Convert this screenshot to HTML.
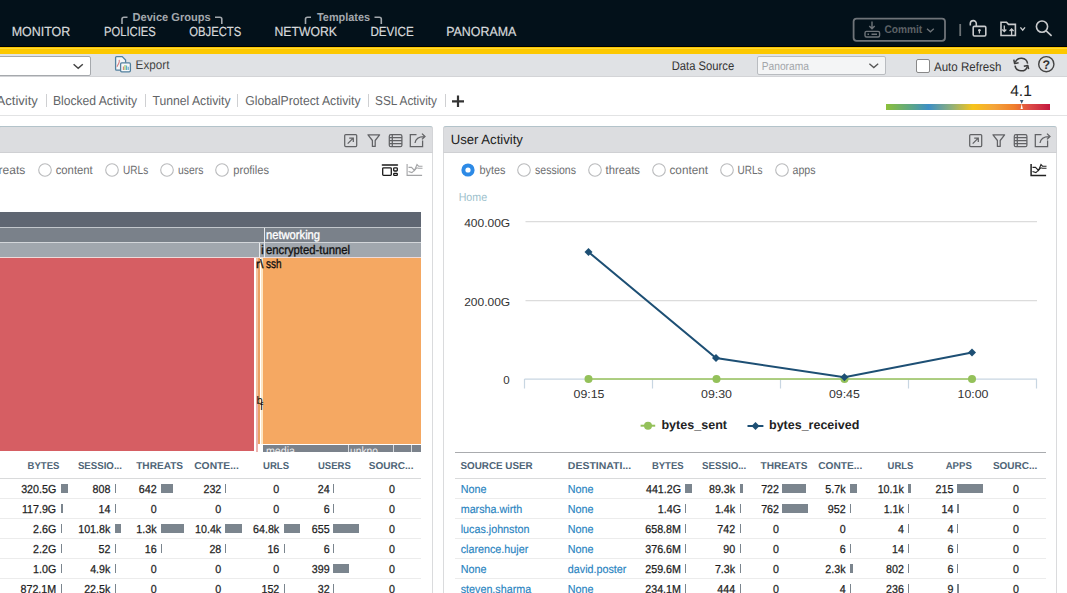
<!DOCTYPE html><html><head><meta charset="utf-8"><style>
html,body{margin:0;padding:0;width:1067px;height:593px;overflow:hidden;background:#fff;position:relative}
.t{position:absolute;white-space:pre;line-height:1;transform-origin:0 0;font-family:"Liberation Sans",sans-serif}
.r{position:absolute}
.s{position:absolute;overflow:visible}
</style></head><body>
<div class="r" style="left:0px;top:0px;width:1067px;height:47px;background:#03111a;"></div>
<div class="r" style="left:0px;top:46px;width:1067px;height:1px;background:#000;"></div>
<div class="r" style="left:0px;top:47px;width:1067px;height:7px;background:#fcc800;"></div>
<div class="r" style="left:0px;top:47.5px;width:1067px;height:1px;background:#ffd838;"></div>
<div class="r" style="left:0px;top:54px;width:1067px;height:23px;background:#e0e2e5;"></div>
<div class="r" style="left:0px;top:76px;width:1067px;height:1px;background:#d3d4d7;"></div>
<svg class="s" style="left:0;top:0" width="540" height="47" viewBox="0 0 540 47" fill="none" stroke="#a3a8ad" stroke-width="1.6">
<path d="M122 24 V19 Q122 17.2 124 17.2 H127.5"/><path d="M215 17.2 H219.8 Q221.8 17.2 221.8 19 V24"/>
<path d="M305.5 24 V19 Q305.5 17.2 307.5 17.2 H311"/><path d="M374.5 17.2 H379.3 Q381.3 17.2 381.3 19 V24"/>
</svg>
<svg class="s" style="left:840px;top:10px" width="227" height="37" viewBox="840 10 227 37" fill="none" stroke="#6f7479" stroke-width="1.8">
<rect x="853.6" y="18.6" width="91.4" height="22.2" rx="3"/>
<path d="M872 21.5 V28.5 M869.3 26 L872 28.8 L874.7 26" stroke-width="1.4"/>
<rect x="865" y="31.4" width="14.6" height="5.6" rx="1.5" stroke-width="1.4"/>
<path d="M867.5 34.2 H869 M871.5 34.2 H877" stroke-width="1.4"/>
<path d="M927 28.8 L930.4 31.8 L933.8 28.8" stroke-width="1.3"/>
</svg>
<svg class="s" style="left:950px;top:10px" width="117" height="37" viewBox="950 10 117 37" fill="none" stroke="#c9cbcd" stroke-width="1.6">
<path d="M960.2 24 V36" stroke="#6c7175" stroke-width="1.8"/>
<path d="M970.3 25.6 V23.6 A3 3 0 0 1 976.3 23.6 V26"/>
<rect x="973.2" y="26.4" width="12.6" height="9.6" rx="1.2"/>
<circle cx="979.4" cy="30.3" r="1.3" fill="#c9cbcd" stroke="none"/><path d="M979.4 30.5 V33.4" stroke-width="1.2"/>
<path d="M1001 22.2 H1006.5 L1008.5 24.4 H1015.4 V35.5 H1001 Z"/>
<path d="M1004.3 25.5 V31.5 M1002.3 29.5 L1004.3 31.6 L1006.3 29.5 M1011.6 35 V29 M1009.6 31 L1011.6 28.9 L1013.6 31" stroke-width="1.3"/>
<path d="M1020.4 27.4 L1022.7 30.2 L1025 27.4" stroke-width="1.4"/>
<circle cx="1042" cy="26.6" r="5.6"/><path d="M1046.2 30.8 L1051.6 35.8"/>
</svg>
<div class="r" style="left:-4px;top:55.5px;width:94.5px;height:20px;background:#fff;border:1px solid #a6a9ad;border-radius:2px;box-sizing:border-box;"></div>
<svg class="s" style="left:60px;top:55px" width="40" height="22" viewBox="60 55 40 22" fill="none" stroke="#444" stroke-width="1.5">
<path d="M73.6 64.3 L78.2 68.3 L82.8 64.3"/></svg>
<svg class="s" style="left:110px;top:52px" width="26" height="24" viewBox="110 52 26 24" fill="none">
<path d="M116.6 56.6 H122.2 L125.6 60 V69.2 Q125.6 70.2 124.6 70.2 H116.6 Q115.6 70.2 115.6 69.2 V57.6 Q115.6 56.6 116.6 56.6 Z" stroke="#52809f" stroke-width="1.3" fill="#f4f6f8"/>
<path d="M119.2 59.8 Q119.6 62 118.6 63.6 Q117.6 65.2 117 66.8" stroke="#d88080" stroke-width="1.1"/>
<rect x="120.6" y="62.8" width="9.8" height="9" rx="1.2" stroke="#52809f" stroke-width="1.3" fill="#f7f9fa"/>
<path d="M123.4 70 V66.4" stroke="#d8826e" stroke-width="1.1"/><path d="M125 70 V65" stroke="#8cc063" stroke-width="1.1"/><path d="M126.6 70 V65.6" stroke="#5aa8c8" stroke-width="1.1"/><path d="M128.2 70 V66.8" stroke="#5aa8c8" stroke-width="1.1"/>
</svg>
<div class="r" style="left:756.5px;top:56px;width:129.5px;height:19px;background:#f4f5f6;border:1px solid #b9bcc0;border-radius:2px;box-sizing:border-box;"></div>
<svg class="s" style="left:860px;top:56px" width="26" height="19" viewBox="860 56 26 19" fill="none" stroke="#555" stroke-width="1.3">
<path d="M869.4 63.8 L873.8 67.6 L878.2 63.8"/></svg>
<div class="r" style="left:916px;top:59px;width:13.5px;height:13.5px;background:#fff;border:1px solid #888;border-radius:2px;box-sizing:border-box;"></div>
<svg class="s" style="left:1010px;top:54px" width="57" height="22" viewBox="1010 54 57 22" fill="none" stroke="#3c3c3c" stroke-width="1.5">
<path d="M1015.2 62.6 A6.4 6.4 0 0 1 1027.6 63.6"/>
<path d="M1027.4 66.4 A6.4 6.4 0 0 1 1015 65.6"/>
<path d="M1013.8 59.6 L1014.6 63.6 L1018.6 62.8" stroke-linejoin="round"/>
<path d="M1028.6 69.2 L1027.8 65.4 L1023.8 66.2" stroke-linejoin="round"/>
<circle cx="1046.3" cy="64.2" r="7.6" stroke="#444" stroke-width="1.4"/>
</svg>
<div class="r" style="left:0px;top:77px;width:1067px;height:38px;background:#fff;"></div>
<div class="r" style="left:0px;top:115px;width:1067px;height:1px;background:#e2e3e4;"></div>
<div class="r" style="left:46px;top:94px;width:1px;height:12.5px;background:#cfd0d2;"></div>
<div class="r" style="left:145px;top:94px;width:1px;height:12.5px;background:#cfd0d2;"></div>
<div class="r" style="left:237px;top:94px;width:1px;height:12.5px;background:#cfd0d2;"></div>
<div class="r" style="left:368px;top:94px;width:1px;height:12.5px;background:#cfd0d2;"></div>
<div class="r" style="left:445px;top:94px;width:1px;height:12.5px;background:#cfd0d2;"></div>
<svg class="s" style="left:448px;top:92px" width="20" height="20" viewBox="448 92 20 20" stroke="#333" stroke-width="2.2">
<path d="M458 95.5 V107 M452 101.3 H464"/></svg>
<div class="r" style="left:-2px;top:126px;width:435px;height:470px;background:#fff;border-left:1px solid #dadbdd;border-right:1px solid #dadbdd;box-sizing:border-box;border-radius:3px 3px 0 0;"></div>
<div class="r" style="left:-2px;top:126px;width:435px;height:27px;background:#dcdde0;border-top:1px solid #b3c3ca;border-bottom:1px solid #cfd0d3;border-left:1px solid #d3d4d7;border-right:1px solid #d3d4d7;box-sizing:border-box;border-radius:3px 3px 0 0;"></div>
<div class="r" style="left:443px;top:126px;width:614px;height:470px;background:#fff;border-left:1px solid #dadbdd;border-right:1px solid #dadbdd;box-sizing:border-box;border-radius:3px 3px 0 0;"></div>
<div class="r" style="left:443px;top:126px;width:614px;height:27px;background:#dcdde0;border-top:1px solid #b3c3ca;border-bottom:1px solid #cfd0d3;border-left:1px solid #d3d4d7;border-right:1px solid #d3d4d7;box-sizing:border-box;border-radius:3px 3px 0 0;"></div>
<svg class="s" style="left:342px;top:130px" width="90" height="20" viewBox="342 130 90 20" fill="none" stroke="#616265" stroke-width="1.25">
<rect x="344.7" y="134.6" width="12" height="12" rx="1"/>
<path d="M347.7 143.6 L353.2 138.1 M349.2 138 H353.3 V142" />
<path d="M368 134.8 H379.6 L375.2 140.5 V146.4 H372.4 V140.5 Z" stroke-linejoin="round"/>
<rect x="389.3" y="134.7" width="12.6" height="12" rx="1.5"/>
<path d="M389.3 137.7 H401.9 M389.3 140.7 H401.9 M389.3 143.7 H401.9 M392.3 134.7 V146.7"/>
<path d="M416.5 134.7 H410.3 V146.6 H422.6 V140.5"/>
<path d="M415 143 Q416 136.5 424 136.5 M422 133.6 L425 136.5 L422 139.4"/>
</svg>
<svg class="s" style="left:967px;top:130px" width="90" height="20" viewBox="967 130 90 20" fill="none" stroke="#616265" stroke-width="1.25">
<rect x="969.7" y="134.6" width="12" height="12" rx="1"/>
<path d="M972.7 143.6 L978.2 138.1 M974.2 138 H978.3 V142" />
<path d="M993 134.8 H1004.6 L1000.2 140.5 V146.4 H997.4 V140.5 Z" stroke-linejoin="round"/>
<rect x="1014.3" y="134.7" width="12.6" height="12" rx="1.5"/>
<path d="M1014.3 137.7 H1026.9 M1014.3 140.7 H1026.9 M1014.3 143.7 H1026.9 M1017.3 134.7 V146.7"/>
<path d="M1041.5 134.7 H1035.3 V146.6 H1047.6 V140.5"/>
<path d="M1040 143 Q1041 136.5 1049 136.5 M1047 133.6 L1050 136.5 L1047 139.4"/>
</svg>
<svg class="s" style="left:1028.5px;top:162px" width="20" height="16" viewBox="1028.5 162 20 16" fill="none" stroke="#222" stroke-width="1.1">
<g transform="translate(0.00,0)">
<path d="M1030.6 164 V175.4 H1045.6" stroke-width="1.5"/>
<path d="M1032 167.4 H1035 L1038 170.5 L1040.5 164.6 L1042 166.2 H1046"/>
<path d="M1032 171.4 L1035.4 172.6 L1037.8 170.4 L1040.2 167.8 L1042 168.2 H1046"/>
</g></svg>
<svg class="s" style="left:404.5px;top:162px" width="20" height="16" viewBox="404.5 162 20 16" fill="none" stroke="#a3a4a6" stroke-width="1.1">
<g transform="translate(-624.00,0)">
<path d="M1030.6 164 V175.4 H1045.6" stroke-width="1.1"/>
<path d="M1032 167.4 H1035 L1038 170.5 L1040.5 164.6 L1042 166.2 H1046"/>
<path d="M1032 171.4 L1035.4 172.6 L1037.8 170.4 L1040.2 167.8 L1042 168.2 H1046"/>
</g></svg>
<svg class="s" style="left:380px;top:162px" width="20" height="16" viewBox="380 162 20 16" fill="none" stroke="#1a1a1a" stroke-width="1.3">
<path d="M382.4 165 H397.4" stroke-width="1.6" stroke-linecap="round"/>
<rect x="382.7" y="167.8" width="8.6" height="7.6" rx="0.8"/>
<rect x="393.7" y="167.8" width="3.6" height="3.2" rx="0.8"/>
<rect x="393.7" y="173.4" width="3.6" height="2" rx="0.6"/>
</svg>
<svg class="s" style="left:36.7px;top:161.8px" width="16" height="16" viewBox="0 0 16 16"><circle cx="8" cy="8" r="6.3" fill="#fff" stroke="#b9babc" stroke-width="1.1"/></svg>
<svg class="s" style="left:104px;top:161.8px" width="16" height="16" viewBox="0 0 16 16"><circle cx="8" cy="8" r="6.3" fill="#fff" stroke="#b9babc" stroke-width="1.1"/></svg>
<svg class="s" style="left:159px;top:161.8px" width="16" height="16" viewBox="0 0 16 16"><circle cx="8" cy="8" r="6.3" fill="#fff" stroke="#b9babc" stroke-width="1.1"/></svg>
<svg class="s" style="left:214px;top:161.8px" width="16" height="16" viewBox="0 0 16 16"><circle cx="8" cy="8" r="6.3" fill="#fff" stroke="#b9babc" stroke-width="1.1"/></svg>
<svg class="s" style="left:460.2px;top:161.8px" width="16" height="16" viewBox="0 0 16 16"><circle cx="8" cy="8" r="6.6" fill="#2d8ae6"/><circle cx="8" cy="8" r="2.6" fill="#fff"/></svg>
<svg class="s" style="left:516px;top:161.8px" width="16" height="16" viewBox="0 0 16 16"><circle cx="8" cy="8" r="6.3" fill="#fff" stroke="#b9babc" stroke-width="1.1"/></svg>
<svg class="s" style="left:586.5px;top:161.8px" width="16" height="16" viewBox="0 0 16 16"><circle cx="8" cy="8" r="6.3" fill="#fff" stroke="#b9babc" stroke-width="1.1"/></svg>
<svg class="s" style="left:650.5px;top:161.8px" width="16" height="16" viewBox="0 0 16 16"><circle cx="8" cy="8" r="6.3" fill="#fff" stroke="#b9babc" stroke-width="1.1"/></svg>
<svg class="s" style="left:718.5px;top:161.8px" width="16" height="16" viewBox="0 0 16 16"><circle cx="8" cy="8" r="6.3" fill="#fff" stroke="#b9babc" stroke-width="1.1"/></svg>
<svg class="s" style="left:773.5px;top:161.8px" width="16" height="16" viewBox="0 0 16 16"><circle cx="8" cy="8" r="6.3" fill="#fff" stroke="#b9babc" stroke-width="1.1"/></svg>
<div class="r" style="left:0px;top:212px;width:421px;height:15px;background:#5f6672;"></div>
<div class="r" style="left:0px;top:227px;width:421px;height:1.3px;background:#c3c7cc;"></div>
<div class="r" style="left:0px;top:228px;width:421px;height:14px;background:#7a818a;"></div>
<div class="r" style="left:0px;top:242px;width:421px;height:1.2px;background:#d3d6da;"></div>
<div class="r" style="left:0px;top:243px;width:421px;height:14px;background:#a1a7ae;"></div>
<div class="r" style="left:0px;top:257px;width:421px;height:1.2px;background:#eedada;"></div>
<div class="r" style="left:0px;top:258px;width:254px;height:193px;background:#d65e63;"></div>
<div class="r" style="left:254px;top:258px;width:167px;height:194px;background:#fff;"></div>
<div class="r" style="left:256px;top:258px;width:2.2px;height:193px;background:#f3c3a0;"></div>
<div class="r" style="left:258.2px;top:258px;width:2.3px;height:186px;background:#eaa164;"></div>
<div class="r" style="left:260.5px;top:258px;width:2.4px;height:186px;background:#fde6c4;"></div>
<div class="r" style="left:262.9px;top:258px;width:2px;height:186px;background:#f4a862;"></div>
<div class="r" style="left:265px;top:258px;width:156px;height:185.5px;background:#f5a862;"></div>
<div class="r" style="left:256px;top:395.5px;width:2.2px;height:56px;background:#ecb4b0;"></div>
<div class="r" style="left:258.2px;top:444px;width:6.8px;height:8px;background:#fff;"></div>
<div class="r" style="left:263.3px;top:445px;width:158px;height:7px;background:#7b828b;"></div>
<div class="r" style="left:347.6px;top:445px;width:1px;height:7px;background:#d7dadd;"></div>
<div class="r" style="left:392.8px;top:445px;width:1px;height:7px;background:#d7dadd;"></div>
<div class="r" style="left:410.8px;top:445px;width:1px;height:7px;background:#d7dadd;"></div>
<div class="r" style="left:263.8px;top:228px;width:1px;height:30px;background:#e7e9ec;"></div>
<div class="r" style="left:259.3px;top:243px;width:1px;height:15px;background:#e7e9ec;"></div>
<div class="r" style="left:0px;top:478px;width:421px;height:1px;background:#d9dadb;"></div>
<div class="r" style="left:0px;top:498px;width:421px;height:1px;background:#ececec;"></div>
<div class="r" style="left:0px;top:518px;width:421px;height:1px;background:#ececec;"></div>
<div class="r" style="left:0px;top:538px;width:421px;height:1px;background:#ececec;"></div>
<div class="r" style="left:0px;top:558px;width:421px;height:1px;background:#ececec;"></div>
<div class="r" style="left:0px;top:578px;width:421px;height:1px;background:#ececec;"></div>
<div class="r" style="left:60.9px;top:484px;width:6.7px;height:9px;background:#7b858e;"></div>
<div class="r" style="left:115px;top:484px;width:1.2px;height:9px;background:#7b858e;"></div>
<div class="r" style="left:161.2px;top:484px;width:11.6px;height:9px;background:#7b858e;"></div>
<div class="r" style="left:225px;top:484px;width:1.2px;height:9px;background:#7b858e;"></div>
<div class="r" style="left:333px;top:484px;width:1.2px;height:9px;background:#7b858e;"></div>
<div class="r" style="left:60.9px;top:504px;width:2.5px;height:9px;background:#7b858e;"></div>
<div class="r" style="left:115px;top:504px;width:1.2px;height:9px;background:#7b858e;"></div>
<div class="r" style="left:333px;top:504px;width:1.2px;height:9px;background:#7b858e;"></div>
<div class="r" style="left:61px;top:524px;width:1.2px;height:9px;background:#7b858e;"></div>
<div class="r" style="left:115.3px;top:524px;width:5.4px;height:9px;background:#7b858e;"></div>
<div class="r" style="left:161.2px;top:524px;width:22.7px;height:9px;background:#7b858e;"></div>
<div class="r" style="left:225.4px;top:524px;width:17px;height:9px;background:#7b858e;"></div>
<div class="r" style="left:283.7px;top:524px;width:16.8px;height:9px;background:#7b858e;"></div>
<div class="r" style="left:333px;top:524px;width:25.5px;height:9px;background:#7b858e;"></div>
<div class="r" style="left:61px;top:544px;width:1.2px;height:9px;background:#7b858e;"></div>
<div class="r" style="left:115px;top:544px;width:1.2px;height:9px;background:#7b858e;"></div>
<div class="r" style="left:161px;top:544px;width:1.2px;height:9px;background:#7b858e;"></div>
<div class="r" style="left:225px;top:544px;width:1.2px;height:9px;background:#7b858e;"></div>
<div class="r" style="left:284px;top:544px;width:1.2px;height:9px;background:#7b858e;"></div>
<div class="r" style="left:333px;top:544px;width:1.2px;height:9px;background:#7b858e;"></div>
<div class="r" style="left:61px;top:564px;width:1.2px;height:9px;background:#7b858e;"></div>
<div class="r" style="left:115px;top:564px;width:1.2px;height:9px;background:#7b858e;"></div>
<div class="r" style="left:333px;top:564px;width:16px;height:9px;background:#7b858e;"></div>
<div class="r" style="left:61px;top:584px;width:1.2px;height:9px;background:#7b858e;"></div>
<div class="r" style="left:115px;top:584px;width:1.2px;height:9px;background:#7b858e;"></div>
<div class="r" style="left:284px;top:584px;width:1.2px;height:9px;background:#7b858e;"></div>
<div class="r" style="left:333px;top:584px;width:1.2px;height:9px;background:#7b858e;"></div>
<svg class="s" style="left:440px;top:180px" width="627" height="270" viewBox="440 180 627 270" fill="none">
<path d="M525.5 221.6 H1037 M525.5 300.6 H1037" stroke="#dcdcdc" stroke-width="1.2"/>
<path d="M524.5 379.2 H1037" stroke="#c8d6e2" stroke-width="1.2"/>
<path d="M524.5 379 V388.5 M652.5 379 V388.5 M780.5 379 V388.5 M908.5 379 V388.5 M1036.5 379 V388.5" stroke="#c8d6e2" stroke-width="1.2"/>
<path d="M588.5 379 H972" stroke="#9cc65e" stroke-width="1.6"/>
<circle cx="588.5" cy="379" r="4" fill="#94c15a"/><circle cx="716.5" cy="379" r="4" fill="#94c15a"/>
<circle cx="844.5" cy="379" r="4" fill="#94c15a"/><circle cx="972" cy="379" r="4" fill="#94c15a"/>
<path d="M588.5 252 L716 358 L844.4 377.3 L972 352.5" stroke="#1d4f74" stroke-width="2"/>
<path d="M588.5 248 L592.5 252 L588.5 256 L584.5 252 Z M716 354 L720 358 L716 362 L712 358 Z M844.4 373.3 L848.4 377.3 L844.4 381.3 L840.4 377.3 Z M972 348.5 L976 352.5 L972 356.5 L968 352.5 Z" fill="#1d4f74"/>
<path d="M640.6 425.7 H655.2" stroke="#94c15a" stroke-width="2"/><circle cx="648" cy="425.7" r="4" fill="#94c15a"/>
<path d="M747.5 426 H763.4" stroke="#1d4f74" stroke-width="2"/><path d="M755.5 422 L759.5 426 L755.5 430 L751.5 426 Z" fill="#1d4f74"/>
</svg>
<div class="r" style="left:454.5px;top:452px;width:591.5px;height:1px;background:#a9abae;"></div>
<div class="r" style="left:454.5px;top:478px;width:591.5px;height:1px;background:#d9dadb;"></div>
<div class="r" style="left:454.5px;top:498px;width:591.5px;height:1px;background:#ececec;"></div>
<div class="r" style="left:454.5px;top:518px;width:591.5px;height:1px;background:#ececec;"></div>
<div class="r" style="left:454.5px;top:538px;width:591.5px;height:1px;background:#ececec;"></div>
<div class="r" style="left:454.5px;top:558px;width:591.5px;height:1px;background:#ececec;"></div>
<div class="r" style="left:454.5px;top:578px;width:591.5px;height:1px;background:#ececec;"></div>
<div class="r" style="left:684.9px;top:484px;width:7.2px;height:9px;background:#7b858e;"></div>
<div class="r" style="left:739.6px;top:484px;width:3.3px;height:9px;background:#7b858e;"></div>
<div class="r" style="left:782.4px;top:484px;width:23.8px;height:9px;background:#7b858e;"></div>
<div class="r" style="left:850px;top:484px;width:6.5px;height:9px;background:#7b858e;"></div>
<div class="r" style="left:907.8px;top:484px;width:3.1px;height:9px;background:#7b858e;"></div>
<div class="r" style="left:957px;top:484px;width:26.1px;height:9px;background:#7b858e;"></div>
<div class="r" style="left:685px;top:504px;width:1.2px;height:9px;background:#7b858e;"></div>
<div class="r" style="left:740px;top:504px;width:1.2px;height:9px;background:#7b858e;"></div>
<div class="r" style="left:782.4px;top:504px;width:25.8px;height:9px;background:#7b858e;"></div>
<div class="r" style="left:850px;top:504px;width:1.2px;height:9px;background:#7b858e;"></div>
<div class="r" style="left:908px;top:504px;width:1.2px;height:9px;background:#7b858e;"></div>
<div class="r" style="left:957px;top:504px;width:1.8px;height:9px;background:#7b858e;"></div>
<div class="r" style="left:685px;top:524px;width:1.2px;height:9px;background:#7b858e;"></div>
<div class="r" style="left:740px;top:524px;width:1.2px;height:9px;background:#7b858e;"></div>
<div class="r" style="left:908px;top:524px;width:1.2px;height:9px;background:#7b858e;"></div>
<div class="r" style="left:957px;top:524px;width:1.2px;height:9px;background:#7b858e;"></div>
<div class="r" style="left:685px;top:544px;width:1.2px;height:9px;background:#7b858e;"></div>
<div class="r" style="left:740px;top:544px;width:1.2px;height:9px;background:#7b858e;"></div>
<div class="r" style="left:850px;top:544px;width:1.2px;height:9px;background:#7b858e;"></div>
<div class="r" style="left:908px;top:544px;width:1.2px;height:9px;background:#7b858e;"></div>
<div class="r" style="left:957px;top:544px;width:1.2px;height:9px;background:#7b858e;"></div>
<div class="r" style="left:685px;top:564px;width:1.2px;height:9px;background:#7b858e;"></div>
<div class="r" style="left:740px;top:564px;width:1.2px;height:9px;background:#7b858e;"></div>
<div class="r" style="left:850px;top:564px;width:2.5px;height:9px;background:#7b858e;"></div>
<div class="r" style="left:908px;top:564px;width:1.2px;height:9px;background:#7b858e;"></div>
<div class="r" style="left:957px;top:564px;width:1.2px;height:9px;background:#7b858e;"></div>
<div class="r" style="left:685px;top:584px;width:1.2px;height:9px;background:#7b858e;"></div>
<div class="r" style="left:740px;top:584px;width:1.2px;height:9px;background:#7b858e;"></div>
<div class="r" style="left:850px;top:584px;width:1.2px;height:9px;background:#7b858e;"></div>
<div class="r" style="left:908px;top:584px;width:1.2px;height:9px;background:#7b858e;"></div>
<div class="r" style="left:957px;top:584px;width:1.8px;height:9px;background:#7b858e;"></div>
<div class="r" style="left:886px;top:104px;width:164px;height:5.5px;background:linear-gradient(90deg,#8cc03a 0%,#5aa58a 16%,#3d8fc6 26%,#8fb07a 40%,#f7c41a 53%,#f4a43a 66%,#f07f2c 78%,#dc4a46 88%,#c3173f 100%);"></div>
<svg class="s" style="left:1010px;top:95px" width="24" height="16" viewBox="1010 95 24 16">
<path d="M1021.7 103.5 L1020.6 109 H1022.8 Z" fill="#fff"/>
<path d="M1019.9 100 H1023.5 L1021.7 103.8 Z" fill="#3a5a78"/>
</svg>
<svg class="s" style="left:0;top:0" width="1067" height="593" viewBox="0 0 1067 593" font-family="Liberation Sans, sans-serif" text-rendering="geometricPrecision"><defs><clipPath id="tmc"><rect x="0" y="212" width="421" height="240"/></clipPath></defs><text x="11.70" y="35.50" font-size="13.2" fill="#d8dadc" textLength="58.59" lengthAdjust="spacingAndGlyphs" stroke="#d8dadc" stroke-width="0.2">MONITOR</text>
<text x="103.90" y="35.50" font-size="13.2" fill="#d8dadc" textLength="51.89" lengthAdjust="spacingAndGlyphs" stroke="#d8dadc" stroke-width="0.2">POLICIES</text>
<text x="189.30" y="35.50" font-size="13.2" fill="#d8dadc" textLength="51.98" lengthAdjust="spacingAndGlyphs" stroke="#d8dadc" stroke-width="0.2">OBJECTS</text>
<text x="274.50" y="35.50" font-size="13.2" fill="#d8dadc" textLength="62.47" lengthAdjust="spacingAndGlyphs" stroke="#d8dadc" stroke-width="0.2">NETWORK</text>
<text x="370.40" y="35.50" font-size="13.2" fill="#d8dadc" textLength="43.24" lengthAdjust="spacingAndGlyphs" stroke="#d8dadc" stroke-width="0.2">DEVICE</text>
<text x="446.20" y="35.50" font-size="13.2" fill="#d8dadc" textLength="70.17" lengthAdjust="spacingAndGlyphs" stroke="#d8dadc" stroke-width="0.2">PANORAMA</text>
<text x="132.60" y="21.20" font-size="11.5" fill="#a3a8ad" font-weight="bold" textLength="77.97" lengthAdjust="spacingAndGlyphs">Device Groups</text>
<text x="317.00" y="21.20" font-size="11.5" fill="#a3a8ad" font-weight="bold" textLength="53.03" lengthAdjust="spacingAndGlyphs">Templates</text>
<text x="884.50" y="33.20" font-size="11" fill="#5d6266" font-weight="bold" textLength="37.74" lengthAdjust="spacingAndGlyphs">Commit</text>
<text x="135.60" y="69.00" font-size="12.5" fill="#444" textLength="33.82" lengthAdjust="spacingAndGlyphs">Export</text>
<text x="671.70" y="69.80" font-size="12.5" fill="#333" textLength="62.48" lengthAdjust="spacingAndGlyphs">Data Source</text>
<text x="761.70" y="69.50" font-size="11.5" fill="#a3a6aa" textLength="47.26" lengthAdjust="spacingAndGlyphs">Panorama</text>
<text x="934.00" y="70.80" font-size="12.5" fill="#333" textLength="67.36" lengthAdjust="spacingAndGlyphs">Auto Refresh</text>
<text x="1042.50" y="69.20" font-size="12.5" fill="#333" font-weight="bold">?</text>
<text x="-3.40" y="105.20" font-size="13" fill="#626467">Activity</text>
<text x="52.90" y="105.20" font-size="13" fill="#626467" textLength="84.31" lengthAdjust="spacingAndGlyphs">Blocked Activity</text>
<text x="152.50" y="105.20" font-size="13" fill="#626467" textLength="78.03" lengthAdjust="spacingAndGlyphs">Tunnel Activity</text>
<text x="245.30" y="105.20" font-size="13" fill="#626467" textLength="115.22" lengthAdjust="spacingAndGlyphs">GlobalProtect Activity</text>
<text x="375.00" y="105.20" font-size="13" fill="#626467" textLength="61.96" lengthAdjust="spacingAndGlyphs">SSL Activity</text>
<text x="450.70" y="144.40" font-size="13.3" fill="#222" textLength="72.26" lengthAdjust="spacingAndGlyphs">User Activity</text>
<text x="-11.40" y="174.00" font-size="12" fill="#6d6e70">threats</text>
<text x="55.70" y="174.00" font-size="12" fill="#6d6e70" textLength="37.06" lengthAdjust="spacingAndGlyphs">content</text>
<text x="123.10" y="174.00" font-size="12" fill="#6d6e70" textLength="25.10" lengthAdjust="spacingAndGlyphs">URLs</text>
<text x="178.00" y="174.00" font-size="12" fill="#6d6e70" textLength="25.34" lengthAdjust="spacingAndGlyphs">users</text>
<text x="233.30" y="174.00" font-size="12" fill="#6d6e70" textLength="35.68" lengthAdjust="spacingAndGlyphs">profiles</text>
<text x="479.50" y="174.00" font-size="12" fill="#6d6e70" textLength="25.98" lengthAdjust="spacingAndGlyphs">bytes</text>
<text x="535.00" y="174.00" font-size="12" fill="#6d6e70" textLength="40.99" lengthAdjust="spacingAndGlyphs">sessions</text>
<text x="605.50" y="174.00" font-size="12" fill="#6d6e70" textLength="34.49" lengthAdjust="spacingAndGlyphs">threats</text>
<text x="669.50" y="174.00" font-size="12" fill="#6d6e70" textLength="38.46" lengthAdjust="spacingAndGlyphs">content</text>
<text x="737.50" y="174.00" font-size="12" fill="#6d6e70" textLength="25.00" lengthAdjust="spacingAndGlyphs">URLs</text>
<text x="792.50" y="174.00" font-size="12" fill="#6d6e70" textLength="23.02" lengthAdjust="spacingAndGlyphs">apps</text>
<text x="266.00" y="238.60" font-size="12.5" fill="#fff" textLength="54.04" lengthAdjust="spacingAndGlyphs" stroke="#fff" stroke-width="0.35">networking</text>
<text x="261.00" y="253.60" font-size="12.5" fill="#111" stroke="#111" stroke-width="0.35">i</text>
<text x="266.00" y="253.60" font-size="12.5" fill="#111" textLength="84.01" lengthAdjust="spacingAndGlyphs" stroke="#111" stroke-width="0.35">encrypted-tunnel</text>
<text x="256.00" y="268.40" font-size="12" fill="#111" textLength="7.43" lengthAdjust="spacingAndGlyphs" stroke="#111" stroke-width="0.35">r\</text>
<text x="266.00" y="268.40" font-size="12.5" fill="#111" textLength="15.46" lengthAdjust="spacingAndGlyphs" stroke="#111" stroke-width="0.35">ssh</text>
<text x="256.50" y="404.00" font-size="11" fill="#111">b</text>
<text x="260.00" y="410.00" font-size="11" fill="#111">f</text>
<text x="266.00" y="455.00" font-size="12" fill="#eee" textLength="28.98" lengthAdjust="spacingAndGlyphs" clip-path="url(#tmc)">media</text>
<text x="350.00" y="455.00" font-size="12" fill="#eee" textLength="27.99" lengthAdjust="spacingAndGlyphs" clip-path="url(#tmc)">unkno</text>
<text x="27.60" y="469.10" font-size="10" fill="#4f6577" font-weight="bold" textLength="31.74" lengthAdjust="spacingAndGlyphs">BYTES</text>
<text x="77.90" y="469.10" font-size="10" fill="#4f6577" font-weight="bold" textLength="44.07" lengthAdjust="spacingAndGlyphs">SESSIO...</text>
<text x="136.20" y="469.10" font-size="10" fill="#4f6577" font-weight="bold" textLength="46.88" lengthAdjust="spacingAndGlyphs">THREATS</text>
<text x="194.20" y="469.10" font-size="10" fill="#4f6577" font-weight="bold" textLength="44.64" lengthAdjust="spacingAndGlyphs">CONTE...</text>
<text x="263.00" y="469.10" font-size="10" fill="#4f6577" font-weight="bold" textLength="26.02" lengthAdjust="spacingAndGlyphs">URLS</text>
<text x="318.00" y="469.10" font-size="10" fill="#4f6577" font-weight="bold" textLength="32.76" lengthAdjust="spacingAndGlyphs">USERS</text>
<text x="368.80" y="469.10" font-size="10" fill="#4f6577" font-weight="bold" textLength="44.65" lengthAdjust="spacingAndGlyphs">SOURC...</text>
<text x="21.14" y="493.00" font-size="11.5" fill="#1e1e1e" textLength="35.08" lengthAdjust="spacingAndGlyphs" stroke="#1e1e1e" stroke-width="0.25">320.5G</text>
<text x="92.54" y="493.00" font-size="11.5" fill="#1e1e1e" textLength="17.84" lengthAdjust="spacingAndGlyphs" stroke="#1e1e1e" stroke-width="0.25">808</text>
<text x="138.74" y="493.00" font-size="11.5" fill="#1e1e1e" textLength="17.84" lengthAdjust="spacingAndGlyphs" stroke="#1e1e1e" stroke-width="0.25">642</text>
<text x="203.44" y="493.00" font-size="11.5" fill="#1e1e1e" textLength="17.84" lengthAdjust="spacingAndGlyphs" stroke="#1e1e1e" stroke-width="0.25">232</text>
<text x="273.35" y="493.00" font-size="11.5" fill="#1e1e1e" textLength="5.95" lengthAdjust="spacingAndGlyphs" stroke="#1e1e1e" stroke-width="0.25">0</text>
<text x="317.70" y="493.00" font-size="11.5" fill="#1e1e1e" textLength="11.90" lengthAdjust="spacingAndGlyphs" stroke="#1e1e1e" stroke-width="0.25">24</text>
<text x="388.95" y="493.00" font-size="11.5" fill="#1e1e1e" textLength="5.95" lengthAdjust="spacingAndGlyphs" stroke="#1e1e1e" stroke-width="0.25">0</text>
<text x="21.88" y="513.00" font-size="11.5" fill="#1e1e1e" textLength="34.29" lengthAdjust="spacingAndGlyphs" stroke="#1e1e1e" stroke-width="0.25">117.9G</text>
<text x="98.50" y="513.00" font-size="11.5" fill="#1e1e1e" textLength="11.90" lengthAdjust="spacingAndGlyphs" stroke="#1e1e1e" stroke-width="0.25">14</text>
<text x="150.65" y="513.00" font-size="11.5" fill="#1e1e1e" textLength="5.95" lengthAdjust="spacingAndGlyphs" stroke="#1e1e1e" stroke-width="0.25">0</text>
<text x="215.35" y="513.00" font-size="11.5" fill="#1e1e1e" textLength="5.95" lengthAdjust="spacingAndGlyphs" stroke="#1e1e1e" stroke-width="0.25">0</text>
<text x="273.35" y="513.00" font-size="11.5" fill="#1e1e1e" textLength="5.95" lengthAdjust="spacingAndGlyphs" stroke="#1e1e1e" stroke-width="0.25">0</text>
<text x="323.65" y="513.00" font-size="11.5" fill="#1e1e1e" textLength="5.95" lengthAdjust="spacingAndGlyphs" stroke="#1e1e1e" stroke-width="0.25">6</text>
<text x="388.95" y="513.00" font-size="11.5" fill="#1e1e1e" textLength="5.95" lengthAdjust="spacingAndGlyphs" stroke="#1e1e1e" stroke-width="0.25">0</text>
<text x="33.04" y="533.00" font-size="11.5" fill="#1e1e1e" textLength="23.19" lengthAdjust="spacingAndGlyphs" stroke="#1e1e1e" stroke-width="0.25">2.6G</text>
<text x="78.22" y="533.00" font-size="11.5" fill="#1e1e1e" textLength="32.11" lengthAdjust="spacingAndGlyphs" stroke="#1e1e1e" stroke-width="0.25">101.8k</text>
<text x="136.33" y="533.00" font-size="11.5" fill="#1e1e1e" textLength="20.21" lengthAdjust="spacingAndGlyphs" stroke="#1e1e1e" stroke-width="0.25">1.3k</text>
<text x="195.07" y="533.00" font-size="11.5" fill="#1e1e1e" textLength="26.16" lengthAdjust="spacingAndGlyphs" stroke="#1e1e1e" stroke-width="0.25">10.4k</text>
<text x="253.07" y="533.00" font-size="11.5" fill="#1e1e1e" textLength="26.16" lengthAdjust="spacingAndGlyphs" stroke="#1e1e1e" stroke-width="0.25">64.8k</text>
<text x="311.74" y="533.00" font-size="11.5" fill="#1e1e1e" textLength="17.84" lengthAdjust="spacingAndGlyphs" stroke="#1e1e1e" stroke-width="0.25">655</text>
<text x="388.95" y="533.00" font-size="11.5" fill="#1e1e1e" textLength="5.95" lengthAdjust="spacingAndGlyphs" stroke="#1e1e1e" stroke-width="0.25">0</text>
<text x="33.04" y="553.00" font-size="11.5" fill="#1e1e1e" textLength="23.19" lengthAdjust="spacingAndGlyphs" stroke="#1e1e1e" stroke-width="0.25">2.2G</text>
<text x="98.50" y="553.00" font-size="11.5" fill="#1e1e1e" textLength="11.90" lengthAdjust="spacingAndGlyphs" stroke="#1e1e1e" stroke-width="0.25">52</text>
<text x="144.70" y="553.00" font-size="11.5" fill="#1e1e1e" textLength="11.90" lengthAdjust="spacingAndGlyphs" stroke="#1e1e1e" stroke-width="0.25">16</text>
<text x="209.40" y="553.00" font-size="11.5" fill="#1e1e1e" textLength="11.90" lengthAdjust="spacingAndGlyphs" stroke="#1e1e1e" stroke-width="0.25">28</text>
<text x="267.40" y="553.00" font-size="11.5" fill="#1e1e1e" textLength="11.90" lengthAdjust="spacingAndGlyphs" stroke="#1e1e1e" stroke-width="0.25">16</text>
<text x="323.65" y="553.00" font-size="11.5" fill="#1e1e1e" textLength="5.95" lengthAdjust="spacingAndGlyphs" stroke="#1e1e1e" stroke-width="0.25">6</text>
<text x="388.95" y="553.00" font-size="11.5" fill="#1e1e1e" textLength="5.95" lengthAdjust="spacingAndGlyphs" stroke="#1e1e1e" stroke-width="0.25">0</text>
<text x="33.04" y="573.00" font-size="11.5" fill="#1e1e1e" textLength="23.19" lengthAdjust="spacingAndGlyphs" stroke="#1e1e1e" stroke-width="0.25">1.0G</text>
<text x="90.13" y="573.00" font-size="11.5" fill="#1e1e1e" textLength="20.21" lengthAdjust="spacingAndGlyphs" stroke="#1e1e1e" stroke-width="0.25">4.9k</text>
<text x="150.65" y="573.00" font-size="11.5" fill="#1e1e1e" textLength="5.95" lengthAdjust="spacingAndGlyphs" stroke="#1e1e1e" stroke-width="0.25">0</text>
<text x="215.35" y="573.00" font-size="11.5" fill="#1e1e1e" textLength="5.95" lengthAdjust="spacingAndGlyphs" stroke="#1e1e1e" stroke-width="0.25">0</text>
<text x="273.35" y="573.00" font-size="11.5" fill="#1e1e1e" textLength="5.95" lengthAdjust="spacingAndGlyphs" stroke="#1e1e1e" stroke-width="0.25">0</text>
<text x="311.74" y="573.00" font-size="11.5" fill="#1e1e1e" textLength="17.84" lengthAdjust="spacingAndGlyphs" stroke="#1e1e1e" stroke-width="0.25">399</text>
<text x="388.95" y="573.00" font-size="11.5" fill="#1e1e1e" textLength="5.95" lengthAdjust="spacingAndGlyphs" stroke="#1e1e1e" stroke-width="0.25">0</text>
<text x="20.49" y="593.00" font-size="11.5" fill="#1e1e1e" textLength="35.67" lengthAdjust="spacingAndGlyphs" stroke="#1e1e1e" stroke-width="0.25">872.1M</text>
<text x="84.17" y="593.00" font-size="11.5" fill="#1e1e1e" textLength="26.16" lengthAdjust="spacingAndGlyphs" stroke="#1e1e1e" stroke-width="0.25">22.5k</text>
<text x="150.65" y="593.00" font-size="11.5" fill="#1e1e1e" textLength="5.95" lengthAdjust="spacingAndGlyphs" stroke="#1e1e1e" stroke-width="0.25">0</text>
<text x="215.35" y="593.00" font-size="11.5" fill="#1e1e1e" textLength="5.95" lengthAdjust="spacingAndGlyphs" stroke="#1e1e1e" stroke-width="0.25">0</text>
<text x="261.44" y="593.00" font-size="11.5" fill="#1e1e1e" textLength="17.84" lengthAdjust="spacingAndGlyphs" stroke="#1e1e1e" stroke-width="0.25">152</text>
<text x="317.70" y="593.00" font-size="11.5" fill="#1e1e1e" textLength="11.90" lengthAdjust="spacingAndGlyphs" stroke="#1e1e1e" stroke-width="0.25">32</text>
<text x="388.95" y="593.00" font-size="11.5" fill="#1e1e1e" textLength="5.95" lengthAdjust="spacingAndGlyphs" stroke="#1e1e1e" stroke-width="0.25">0</text>
<text x="458.70" y="201.30" font-size="11.5" fill="#9dbfcc" textLength="28.38" lengthAdjust="spacingAndGlyphs">Home</text>
<text x="464.20" y="227.20" font-size="11.5" fill="#333" textLength="46.02" lengthAdjust="spacingAndGlyphs">400.00G</text>
<text x="464.20" y="305.60" font-size="11.5" fill="#333" textLength="46.02" lengthAdjust="spacingAndGlyphs">200.00G</text>
<text x="503.20" y="384.40" font-size="11.5" fill="#333">0</text>
<text x="573.50" y="398.20" font-size="11.5" fill="#333" textLength="30.97" lengthAdjust="spacingAndGlyphs">09:15</text>
<text x="701.00" y="398.20" font-size="11.5" fill="#333" textLength="30.97" lengthAdjust="spacingAndGlyphs">09:30</text>
<text x="828.90" y="398.20" font-size="11.5" fill="#333" textLength="30.97" lengthAdjust="spacingAndGlyphs">09:45</text>
<text x="957.50" y="398.20" font-size="11.5" fill="#333" textLength="30.97" lengthAdjust="spacingAndGlyphs">10:00</text>
<text x="661.40" y="429.40" font-size="12.5" fill="#222" font-weight="bold" textLength="65.61" lengthAdjust="spacingAndGlyphs">bytes_sent</text>
<text x="769.00" y="429.40" font-size="12.5" fill="#222" font-weight="bold">bytes_received</text>
<text x="460.50" y="469.10" font-size="10" fill="#4f6577" font-weight="bold" textLength="72.25" lengthAdjust="spacingAndGlyphs">SOURCE USER</text>
<text x="567.80" y="469.10" font-size="10" fill="#4f6577" font-weight="bold" textLength="63.37" lengthAdjust="spacingAndGlyphs">DESTINATI...</text>
<text x="651.90" y="469.10" font-size="10" fill="#4f6577" font-weight="bold" textLength="31.74" lengthAdjust="spacingAndGlyphs">BYTES</text>
<text x="702.10" y="469.10" font-size="10" fill="#4f6577" font-weight="bold" textLength="44.17" lengthAdjust="spacingAndGlyphs">SESSIO...</text>
<text x="760.50" y="469.10" font-size="10" fill="#4f6577" font-weight="bold" textLength="46.88" lengthAdjust="spacingAndGlyphs">THREATS</text>
<text x="818.30" y="469.10" font-size="10" fill="#4f6577" font-weight="bold" textLength="43.93" lengthAdjust="spacingAndGlyphs">CONTE...</text>
<text x="887.60" y="469.10" font-size="10" fill="#4f6577" font-weight="bold" textLength="25.82" lengthAdjust="spacingAndGlyphs">URLS</text>
<text x="945.70" y="469.10" font-size="10" fill="#4f6577" font-weight="bold" textLength="26.13" lengthAdjust="spacingAndGlyphs">APPS</text>
<text x="992.90" y="469.10" font-size="10" fill="#4f6577" font-weight="bold">SOURC...</text>
<text x="460.70" y="493.00" font-size="11.5" fill="#2a84bf" textLength="25.70" lengthAdjust="spacingAndGlyphs" stroke="#2a84bf" stroke-width="0.15">None</text>
<text x="567.80" y="493.00" font-size="11.5" fill="#2a84bf" textLength="25.70" lengthAdjust="spacingAndGlyphs" stroke="#2a84bf" stroke-width="0.15">None</text>
<text x="460.70" y="513.00" font-size="11.5" fill="#2a84bf" textLength="61.54" lengthAdjust="spacingAndGlyphs" stroke="#2a84bf" stroke-width="0.15">marsha.wirth</text>
<text x="567.80" y="513.00" font-size="11.5" fill="#2a84bf" textLength="25.70" lengthAdjust="spacingAndGlyphs" stroke="#2a84bf" stroke-width="0.15">None</text>
<text x="460.70" y="533.00" font-size="11.5" fill="#2a84bf" textLength="68.74" lengthAdjust="spacingAndGlyphs" stroke="#2a84bf" stroke-width="0.15">lucas.johnston</text>
<text x="567.80" y="533.00" font-size="11.5" fill="#2a84bf" textLength="25.70" lengthAdjust="spacingAndGlyphs" stroke="#2a84bf" stroke-width="0.15">None</text>
<text x="460.70" y="553.00" font-size="11.5" fill="#2a84bf" textLength="67.54" lengthAdjust="spacingAndGlyphs" stroke="#2a84bf" stroke-width="0.15">clarence.hujer</text>
<text x="567.80" y="553.00" font-size="11.5" fill="#2a84bf" textLength="25.70" lengthAdjust="spacingAndGlyphs" stroke="#2a84bf" stroke-width="0.15">None</text>
<text x="460.70" y="573.00" font-size="11.5" fill="#2a84bf" textLength="25.70" lengthAdjust="spacingAndGlyphs" stroke="#2a84bf" stroke-width="0.15">None</text>
<text x="567.80" y="573.00" font-size="11.5" fill="#2a84bf" textLength="58.57" lengthAdjust="spacingAndGlyphs" stroke="#2a84bf" stroke-width="0.15">david.poster</text>
<text x="460.70" y="593.00" font-size="11.5" fill="#2a84bf" textLength="70.52" lengthAdjust="spacingAndGlyphs" stroke="#2a84bf" stroke-width="0.15">steven.sharma</text>
<text x="567.80" y="593.00" font-size="11.5" fill="#2a84bf" textLength="25.70" lengthAdjust="spacingAndGlyphs" stroke="#2a84bf" stroke-width="0.15">None</text>
<text x="645.94" y="493.00" font-size="11.5" fill="#1e1e1e" textLength="35.08" lengthAdjust="spacingAndGlyphs" stroke="#1e1e1e" stroke-width="0.25">441.2G</text>
<text x="708.97" y="493.00" font-size="11.5" fill="#1e1e1e" textLength="26.16" lengthAdjust="spacingAndGlyphs" stroke="#1e1e1e" stroke-width="0.25">89.3k</text>
<text x="761.14" y="493.00" font-size="11.5" fill="#1e1e1e" textLength="17.84" lengthAdjust="spacingAndGlyphs" stroke="#1e1e1e" stroke-width="0.25">722</text>
<text x="825.33" y="493.00" font-size="11.5" fill="#1e1e1e" textLength="20.21" lengthAdjust="spacingAndGlyphs" stroke="#1e1e1e" stroke-width="0.25">5.7k</text>
<text x="877.67" y="493.00" font-size="11.5" fill="#1e1e1e" textLength="26.16" lengthAdjust="spacingAndGlyphs" stroke="#1e1e1e" stroke-width="0.25">10.1k</text>
<text x="935.54" y="493.00" font-size="11.5" fill="#1e1e1e" textLength="17.84" lengthAdjust="spacingAndGlyphs" stroke="#1e1e1e" stroke-width="0.25">215</text>
<text x="1013.05" y="493.00" font-size="11.5" fill="#1e1e1e" textLength="5.95" lengthAdjust="spacingAndGlyphs" stroke="#1e1e1e" stroke-width="0.25">0</text>
<text x="657.84" y="513.00" font-size="11.5" fill="#1e1e1e" textLength="23.19" lengthAdjust="spacingAndGlyphs" stroke="#1e1e1e" stroke-width="0.25">1.4G</text>
<text x="714.93" y="513.00" font-size="11.5" fill="#1e1e1e" textLength="20.21" lengthAdjust="spacingAndGlyphs" stroke="#1e1e1e" stroke-width="0.25">1.4k</text>
<text x="761.14" y="513.00" font-size="11.5" fill="#1e1e1e" textLength="17.84" lengthAdjust="spacingAndGlyphs" stroke="#1e1e1e" stroke-width="0.25">762</text>
<text x="827.74" y="513.00" font-size="11.5" fill="#1e1e1e" textLength="17.84" lengthAdjust="spacingAndGlyphs" stroke="#1e1e1e" stroke-width="0.25">952</text>
<text x="883.63" y="513.00" font-size="11.5" fill="#1e1e1e" textLength="20.21" lengthAdjust="spacingAndGlyphs" stroke="#1e1e1e" stroke-width="0.25">1.1k</text>
<text x="941.50" y="513.00" font-size="11.5" fill="#1e1e1e" textLength="11.90" lengthAdjust="spacingAndGlyphs" stroke="#1e1e1e" stroke-width="0.25">14</text>
<text x="1013.05" y="513.00" font-size="11.5" fill="#1e1e1e" textLength="5.95" lengthAdjust="spacingAndGlyphs" stroke="#1e1e1e" stroke-width="0.25">0</text>
<text x="645.29" y="533.00" font-size="11.5" fill="#1e1e1e" textLength="35.67" lengthAdjust="spacingAndGlyphs" stroke="#1e1e1e" stroke-width="0.25">658.8M</text>
<text x="717.34" y="533.00" font-size="11.5" fill="#1e1e1e" textLength="17.84" lengthAdjust="spacingAndGlyphs" stroke="#1e1e1e" stroke-width="0.25">742</text>
<text x="773.05" y="533.00" font-size="11.5" fill="#1e1e1e" textLength="5.95" lengthAdjust="spacingAndGlyphs" stroke="#1e1e1e" stroke-width="0.25">0</text>
<text x="839.65" y="533.00" font-size="11.5" fill="#1e1e1e" textLength="5.95" lengthAdjust="spacingAndGlyphs" stroke="#1e1e1e" stroke-width="0.25">0</text>
<text x="897.95" y="533.00" font-size="11.5" fill="#1e1e1e" textLength="5.95" lengthAdjust="spacingAndGlyphs" stroke="#1e1e1e" stroke-width="0.25">4</text>
<text x="947.45" y="533.00" font-size="11.5" fill="#1e1e1e" textLength="5.95" lengthAdjust="spacingAndGlyphs" stroke="#1e1e1e" stroke-width="0.25">4</text>
<text x="1013.05" y="533.00" font-size="11.5" fill="#1e1e1e" textLength="5.95" lengthAdjust="spacingAndGlyphs" stroke="#1e1e1e" stroke-width="0.25">0</text>
<text x="645.29" y="553.00" font-size="11.5" fill="#1e1e1e" textLength="35.67" lengthAdjust="spacingAndGlyphs" stroke="#1e1e1e" stroke-width="0.25">376.6M</text>
<text x="723.30" y="553.00" font-size="11.5" fill="#1e1e1e" textLength="11.90" lengthAdjust="spacingAndGlyphs" stroke="#1e1e1e" stroke-width="0.25">90</text>
<text x="773.05" y="553.00" font-size="11.5" fill="#1e1e1e" textLength="5.95" lengthAdjust="spacingAndGlyphs" stroke="#1e1e1e" stroke-width="0.25">0</text>
<text x="839.65" y="553.00" font-size="11.5" fill="#1e1e1e" textLength="5.95" lengthAdjust="spacingAndGlyphs" stroke="#1e1e1e" stroke-width="0.25">6</text>
<text x="892.00" y="553.00" font-size="11.5" fill="#1e1e1e" textLength="11.90" lengthAdjust="spacingAndGlyphs" stroke="#1e1e1e" stroke-width="0.25">14</text>
<text x="947.45" y="553.00" font-size="11.5" fill="#1e1e1e" textLength="5.95" lengthAdjust="spacingAndGlyphs" stroke="#1e1e1e" stroke-width="0.25">6</text>
<text x="1013.05" y="553.00" font-size="11.5" fill="#1e1e1e" textLength="5.95" lengthAdjust="spacingAndGlyphs" stroke="#1e1e1e" stroke-width="0.25">0</text>
<text x="645.29" y="573.00" font-size="11.5" fill="#1e1e1e" textLength="35.67" lengthAdjust="spacingAndGlyphs" stroke="#1e1e1e" stroke-width="0.25">259.6M</text>
<text x="714.93" y="573.00" font-size="11.5" fill="#1e1e1e" textLength="20.21" lengthAdjust="spacingAndGlyphs" stroke="#1e1e1e" stroke-width="0.25">7.3k</text>
<text x="773.05" y="573.00" font-size="11.5" fill="#1e1e1e" textLength="5.95" lengthAdjust="spacingAndGlyphs" stroke="#1e1e1e" stroke-width="0.25">0</text>
<text x="825.33" y="573.00" font-size="11.5" fill="#1e1e1e" textLength="20.21" lengthAdjust="spacingAndGlyphs" stroke="#1e1e1e" stroke-width="0.25">2.3k</text>
<text x="886.04" y="573.00" font-size="11.5" fill="#1e1e1e" textLength="17.84" lengthAdjust="spacingAndGlyphs" stroke="#1e1e1e" stroke-width="0.25">802</text>
<text x="947.45" y="573.00" font-size="11.5" fill="#1e1e1e" textLength="5.95" lengthAdjust="spacingAndGlyphs" stroke="#1e1e1e" stroke-width="0.25">6</text>
<text x="1013.05" y="573.00" font-size="11.5" fill="#1e1e1e" textLength="5.95" lengthAdjust="spacingAndGlyphs" stroke="#1e1e1e" stroke-width="0.25">0</text>
<text x="645.29" y="593.00" font-size="11.5" fill="#1e1e1e" textLength="35.67" lengthAdjust="spacingAndGlyphs" stroke="#1e1e1e" stroke-width="0.25">234.1M</text>
<text x="717.34" y="593.00" font-size="11.5" fill="#1e1e1e" textLength="17.84" lengthAdjust="spacingAndGlyphs" stroke="#1e1e1e" stroke-width="0.25">444</text>
<text x="773.05" y="593.00" font-size="11.5" fill="#1e1e1e" textLength="5.95" lengthAdjust="spacingAndGlyphs" stroke="#1e1e1e" stroke-width="0.25">0</text>
<text x="839.65" y="593.00" font-size="11.5" fill="#1e1e1e" textLength="5.95" lengthAdjust="spacingAndGlyphs" stroke="#1e1e1e" stroke-width="0.25">4</text>
<text x="886.04" y="593.00" font-size="11.5" fill="#1e1e1e" textLength="17.84" lengthAdjust="spacingAndGlyphs" stroke="#1e1e1e" stroke-width="0.25">236</text>
<text x="947.45" y="593.00" font-size="11.5" fill="#1e1e1e" textLength="5.95" lengthAdjust="spacingAndGlyphs" stroke="#1e1e1e" stroke-width="0.25">9</text>
<text x="1013.05" y="593.00" font-size="11.5" fill="#1e1e1e" textLength="5.95" lengthAdjust="spacingAndGlyphs" stroke="#1e1e1e" stroke-width="0.25">0</text>
<text x="1010.20" y="95.70" font-size="15.5" fill="#222" textLength="21.65" lengthAdjust="spacingAndGlyphs">4.1</text></svg>
</body></html>
